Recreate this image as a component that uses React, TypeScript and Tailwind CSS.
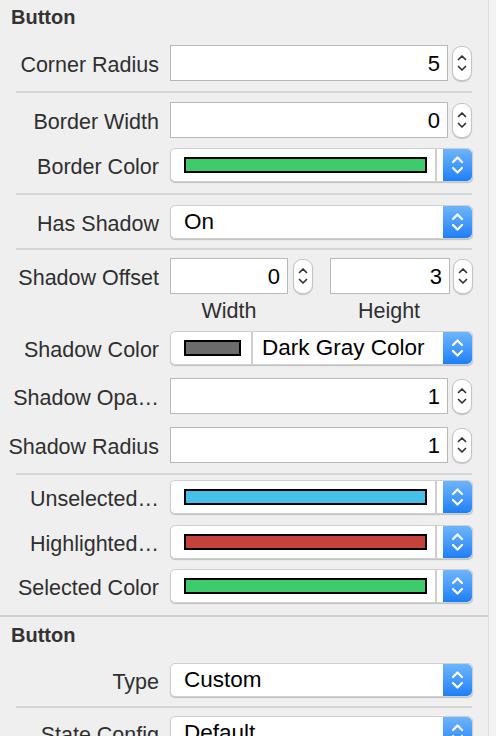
import React from "react";

const FONT = { fontFamily: '"Liberation Sans", Arial, sans-serif' };

function PopupArrows() {
  return (
    <div className="w-[29px] h-full rounded-r-[5px] bg-gradient-to-b from-[#6db5fb] to-[#1b7ff7] flex items-center justify-center">
      <svg width="13" height="22" viewBox="0 0 13 22" fill="none" stroke="white" strokeWidth="2.2" strokeLinecap="round" strokeLinejoin="round">
        <path d="M2 8 L6.5 3.5 L11 8" />
        <path d="M2 14 L6.5 18.5 L11 14" />
      </svg>
    </div>
  );
}

function Stepper() {
  return (
    <div className="w-[20px] h-[35px] rounded-[9px] bg-white border border-[#c4c4c4] shadow-[0_1px_1px_rgba(0,0,0,0.18)] flex items-center justify-center">
      <svg width="10" height="20" viewBox="0 0 10 20" fill="none" stroke="#333333" strokeWidth="1.7" strokeLinecap="round" strokeLinejoin="round">
        <path d="M1.5 6.5 L5 3 L8.5 6.5" />
        <path d="M1.5 13.5 L5 17 L8.5 13.5" />
      </svg>
    </div>
  );
}

function Label({ children }: { children: React.ReactNode }) {
  return (
    <div className="w-[159px] shrink-0 pt-[5px] text-right text-[21.5px] text-[#2f2f2f] whitespace-nowrap leading-none">
      {children}
    </div>
  );
}

function NumberRow({ label, value, mt }: { label: string; value: string; mt: string }) {
  return (
    <div className={`flex items-center ${mt}`}>
      <Label>{label}</Label>
      <div className="ml-[11px] w-[278px] h-[36px] shrink-0 bg-white border border-[#b8b8b8] flex items-center justify-end pr-[7px] text-[22px] text-black">
        {value}
      </div>
      <div className="ml-[4px]">
        <Stepper />
      </div>
    </div>
  );
}

function ColorRow({ label, color, mt }: { label: string; color: string; mt: string }) {
  return (
    <div className={`flex items-center ${mt}`}>
      <Label>{label}</Label>
      <div className="ml-[11px] w-[303px] h-[34px] shrink-0 bg-white rounded-[5px] border border-[#cfcfcf] shadow-[0_1px_1px_rgba(0,0,0,0.2)] flex items-stretch">
        <div className="flex-1 flex items-center pl-[13px]">
          <div className="w-[243px] h-[16px] border-2 border-black" style={{ backgroundColor: color }} />
        </div>
        <div className="w-[2px] bg-[#cfcfcf]" />
        <div className="w-[6px]" />
        <PopupArrows />
      </div>
    </div>
  );
}

function TextPopupRow({ label, value, mt }: { label: string; value: string; mt: string }) {
  return (
    <div className={`flex items-center ${mt}`}>
      <Label>{label}</Label>
      <div className="ml-[11px] w-[303px] h-[34px] shrink-0 bg-white rounded-[5px] border border-[#cfcfcf] shadow-[0_1px_1px_rgba(0,0,0,0.2)] flex items-stretch">
        <div className="flex-1 flex items-center pl-[13px] text-[22.5px] text-black leading-none">{value}</div>
        <PopupArrows />
      </div>
    </div>
  );
}

function Sep({ mt }: { mt: string }) {
  return <div className={`ml-[16px] w-[456px] h-[2px] bg-[#d6d6d6] ${mt}`} />;
}

export default function App() {
  return (
    <div className="w-[496px] h-[736px] overflow-hidden bg-[#efefef] flex items-start" style={FONT}>
      <div className="w-[488px] shrink-0">
        <div className="pl-[11px] pt-[6px] text-[20px] font-bold text-[#333333] leading-[22px]">Button</div>

        <NumberRow label="Corner Radius" value="5" mt="mt-[17px]" />
        <Sep mt="mt-[10px]" />
        <NumberRow label="Border Width" value="0" mt="mt-[9px]" />
        <ColorRow label="Border Color" color="#3ecb6c" mt="mt-[10px]" />
        <Sep mt="mt-[11px]" />
        <TextPopupRow label="Has Shadow" value="On" mt="mt-[10px]" />
        <Sep mt="mt-[9px]" />

        <div className="flex items-center mt-[8px]">
          <Label>Shadow Offset</Label>
          <div className="ml-[11px] w-[118px] h-[36px] shrink-0 bg-white border border-[#b8b8b8] flex items-center justify-end pr-[7px] text-[22px] text-black">0</div>
          <div className="ml-[5px]"><Stepper /></div>
          <div className="ml-[17px] w-[120px] h-[36px] shrink-0 bg-white border border-[#b8b8b8] flex items-center justify-end pr-[7px] text-[22px] text-black">3</div>
          <div className="ml-[3px]"><Stepper /></div>
        </div>
        <div className="flex mt-[6px] text-[21.5px] text-[#2f2f2f] leading-[22px]">
          <div className="ml-[170px] w-[118px] text-center">Width</div>
          <div className="ml-[41px] w-[120px] text-center">Height</div>
        </div>

        <div className="flex items-center mt-[9px]">
          <Label>Shadow Color</Label>
          <div className="ml-[11px] w-[303px] h-[34px] shrink-0 bg-white rounded-[5px] border border-[#cfcfcf] shadow-[0_1px_1px_rgba(0,0,0,0.2)] flex items-stretch">
            <div className="w-[80px] flex items-center pl-[13px]">
              <div className="w-[57px] h-[16px] border-2 border-black bg-[#6b6b6b]" />
            </div>
            <div className="w-[2px] bg-[#cfcfcf]" />
            <div className="flex-1 flex items-center pl-[9px] text-[22.5px] text-black leading-none">Dark Gray Color</div>
            <PopupArrows />
          </div>
        </div>

        <NumberRow label={"Shadow Opa\u2026"} value="1" mt="mt-[13px]" />
        <NumberRow label="Shadow Radius" value="1" mt="mt-[13px]" />
        <Sep mt="mt-[10px]" />

        <ColorRow label={"Unselected\u2026"} color="#44c0e9" mt="mt-[5px]" />
        <ColorRow label={"Highlighted\u2026"} color="#c3433a" mt="mt-[11px]" />
        <ColorRow label="Selected Color" color="#3ecb6c" mt="mt-[10px]" />

        <div className="w-[488px] h-[2px] bg-[#cfcfcf] mt-[12px]" />
        <div className="pl-[11px] mt-[7px] text-[20px] font-bold text-[#333333] leading-[22px]">Button</div>
        <TextPopupRow label="Type" value="Custom" mt="mt-[17px]" />
        <Sep mt="mt-[9px]" />
        <TextPopupRow label="State Config" value="Default" mt="mt-[8px]" />
      </div>
      <div className="self-stretch flex-1 border-l border-[#dcdcdc] bg-[#f3f3f3]" />
    </div>
  );
}
